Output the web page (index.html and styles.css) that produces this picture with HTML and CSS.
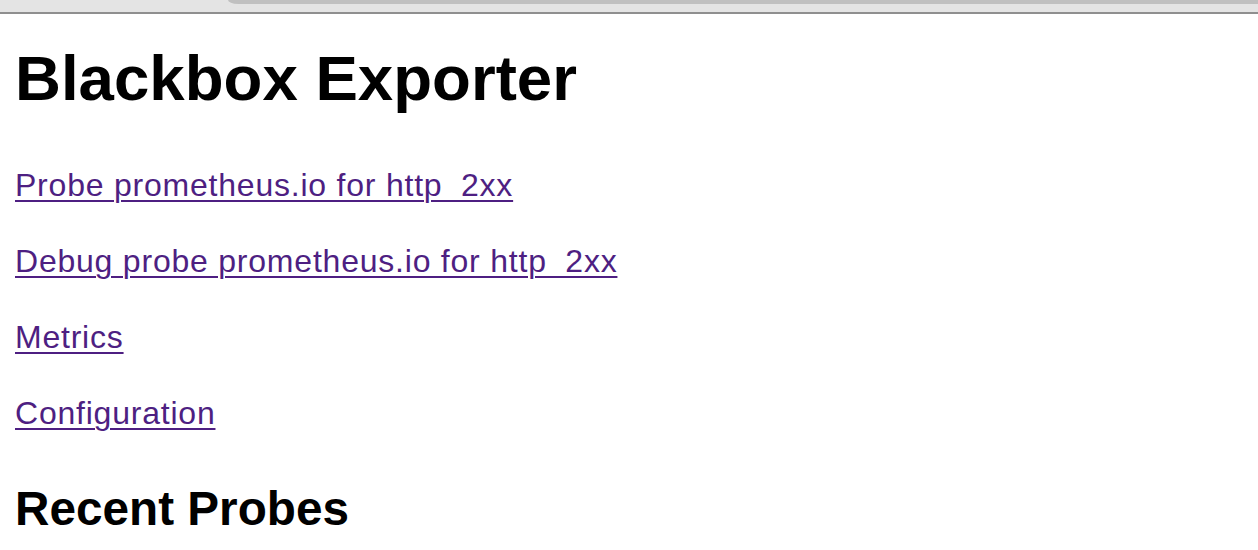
FILE: index.html
```html
<!DOCTYPE html>
<html lang="en">
<head>
<meta charset="utf-8">
<title>Blackbox Exporter</title>
<link rel="stylesheet" href="styles.css">
</head>
<body>
<div class="chrome"><div class="chrome-tab"></div></div>
<main class="page">
  <h1 class="title">Blackbox Exporter</h1>
  <p class="link-row"><a class="link" href="#">Probe prometheus.io for http_2xx</a></p>
  <p class="link-row"><a class="link" href="#">Debug probe prometheus.io for http_2xx</a></p>
  <p class="link-row"><a class="link" href="#">Metrics</a></p>
  <p class="link-row"><a class="link" href="#">Configuration</a></p>
  <h2 class="subtitle">Recent Probes</h2>
</main>
</body>
</html>
```
FILE: styles.css
```css
html, body {
  margin: 0;
  padding: 0;
  background: #ffffff;
  overflow: hidden;
}
body {
  font-family: "Liberation Sans", Arial, sans-serif;
  color: #000;
}
.chrome {
  height: 12px;
  background: #e4e4e4;
  border-bottom: 2px solid #8f8f8f;
  display: flex;
  justify-content: flex-end;
}
.chrome-tab {
  width: calc(100% - 228px);
  height: 4px;
  background: #c0c0c0;
  border-bottom-left-radius: 10px 4px;
}
.page {
  padding: 0 15px;
}
.title {
  font-size: 63.6px;
  font-weight: bold;
  line-height: 74px;
  margin: 27px 0 0;
}
.link-row {
  margin: 0;
  font-size: 32px;
  line-height: 44px;
  margin-top: 32px;
}
.title + .link-row {
  margin-top: 48px;
}
.link {
  color: #4e1f82;
  text-decoration: underline;
  text-decoration-thickness: 2px;
  text-underline-offset: 4px;
  letter-spacing: 0.78px;
}
.subtitle {
  font-size: 47.7px;
  font-weight: bold;
  line-height: 56px;
  margin: 46px 0 0;
}
```
